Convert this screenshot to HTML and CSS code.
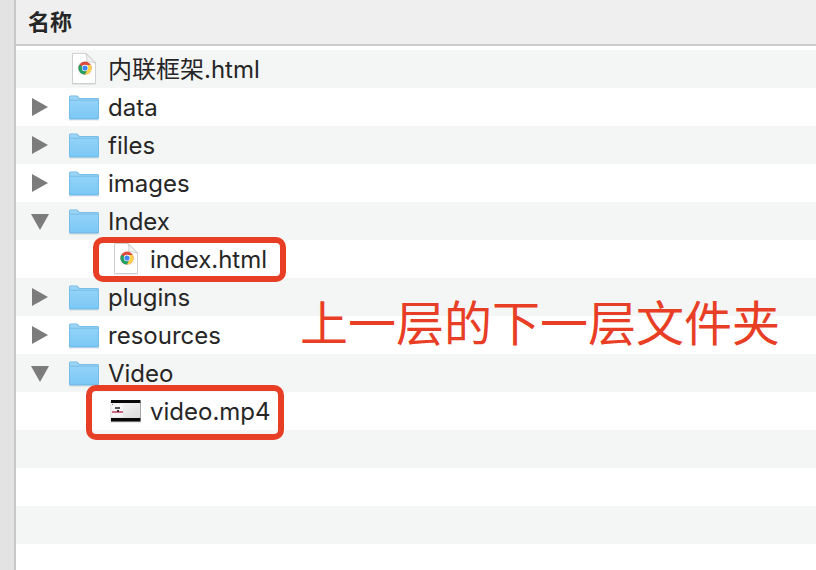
FILE: index.html
```html
<!DOCTYPE html>
<html lang="zh-CN">
<head>
<meta charset="utf-8">
<title>名称</title>
<link rel="stylesheet" href="styles.css">
</head>
<body>
<svg class="defs" aria-hidden="true">
  <defs>
    <linearGradient id="blue" x1="0" y1="0" x2="0" y2="1">
      <stop offset="0" stop-color="#92d2f8"/><stop offset="1" stop-color="#7cc8f5"/>
    </linearGradient>
    <linearGradient id="film" x1="0" y1="0" x2="1" y2="1">
      <stop offset="0" stop-color="#f6f6f6"/><stop offset="1" stop-color="#dcdcdc"/>
    </linearGradient>
    <symbol id="folder" viewBox="0 0 32 28">
      <path d="M1 25.500h30v1H1z" fill="#000" opacity=".12"/>
      <path d="M1 3Q1 1.500 2.500 1.500H8.500Q9.500 1.500 10 2.200L11.500 4H29.500Q31 4 31 5.500V24Q31 25.500 29.500 25.500H2.500Q1 25.500 1 24z" fill="#69b5e2"/>
      <path d="M1.700 3Q1.700 2.200 2.500 2.200H8.500Q9 2.200 9.500 2.800L11 4.700H29.500Q30.300 4.700 30.300 5.500V8H1.700z" fill="#9bd5f6"/>
      <path d="M1.700 6.700H30.300V23.500Q30.300 24.500 29.300 24.500H2.700Q1.700 24.500 1.700 23.500z" fill="url(#blue)"/>
      <path d="M1.700 6.200h28.600" stroke="#69b5e2" stroke-width=".8"/>
    </symbol>
    <symbol id="page" viewBox="0 1 32 34">
      <path d="M4 2h14.500l9 9V32.500H4z" fill="#000" opacity=".13"/>
      <path d="M4.500 1.500H18L27.500 11V31.500H4.500z" fill="#fff" stroke="#c6c6c6" stroke-width=".8"/>
      <path d="M18 1.500Q19.500 6 18.700 9.800Q23 9.500 27.500 11z" fill="#f3f3f3" stroke="#c4c4c4" stroke-width=".8"/>
      <rect x="10" y="10" width="14" height="13" rx="3" fill="#f4f4f4"/>
      <circle cx="17" cy="16" r="6.500" fill="#de4b3c"/>
      <path d="M17 16L11.400 12.700A6.500 6.500 0 0 0 17 22.500L19.600 17.500z" fill="#22a160"/>
      <path d="M17 13H22.800A6.500 6.500 0 0 1 17 22.500L19.600 17.500z" fill="#fdd04a"/>
      <circle cx="17" cy="16" r="3.200" fill="#fff"/>
      <circle cx="17" cy="16" r="2.600" fill="#4285f4"/>
    </symbol>
    <symbol id="clip" viewBox="0 0 32 28">
      <path d="M.5 3h30.500v21.500H.5z" fill="#000" opacity=".18"/>
      <path d="M1 2h29.500v21.500H1z" fill="#080808"/>
      <path d="M1 5h29.500v15H1z" fill="url(#film)"/>
      <path d="M2 6h11v13H2z" fill="#fff" opacity=".5"/>
      <path d="M5 9h5v2H5z" fill="#555"/>
      <path d="M2 13h11v2H2z" fill="#cb6a85"/>
      <path d="M7 12h2v2H7z" fill="#333"/>
      <path d="M2 6h1v1H2z" fill="#777"/>
    </symbol>
  </defs>
</svg>
<div class="window">
  <aside class="gutter"></aside>
  <main class="pane">
    <h1 class="header">名称</h1>
    <ul class="rows">
      <li class="row"><svg class="icon"><use href="#page"/></svg><span>内联框架.html</span></li>
      <li class="row"><button class="toggle" aria-label="data" aria-expanded="false"></button><svg class="icon"><use href="#folder"/></svg><span>data</span></li>
      <li class="row"><button class="toggle" aria-label="files" aria-expanded="false"></button><svg class="icon"><use href="#folder"/></svg><span>files</span></li>
      <li class="row"><button class="toggle" aria-label="images" aria-expanded="false"></button><svg class="icon"><use href="#folder"/></svg><span>images</span></li>
      <li class="row"><button class="toggle" aria-label="Index" aria-expanded="true"></button><svg class="icon"><use href="#folder"/></svg><span>Index</span></li>
      <li class="row child"><svg class="icon"><use href="#page"/></svg><span>index.html</span><i class="mark mark-page"></i></li>
      <li class="row"><button class="toggle" aria-label="plugins" aria-expanded="false"></button><svg class="icon"><use href="#folder"/></svg><span>plugins</span><strong class="note">上一层的下一层文件夹</strong></li>
      <li class="row"><button class="toggle" aria-label="resources" aria-expanded="false"></button><svg class="icon"><use href="#folder"/></svg><span>resources</span></li>
      <li class="row"><button class="toggle" aria-label="Video" aria-expanded="true"></button><svg class="icon"><use href="#folder"/></svg><span>Video</span></li>
      <li class="row child"><svg class="icon"><use href="#clip"/></svg><span>video.mp4</span><i class="mark mark-clip"></i></li>
      <li class="row"></li>
      <li class="row"></li>
      <li class="row"></li>
    </ul>
  </main>
</div>
</body>
</html>
```
FILE: styles.css
```css
* {
  box-sizing: border-box;
}

body {
  margin: 0;
  background: #fff;
  color: #262626;
  font-family: Inter, "Noto Sans CJK SC", sans-serif;
  font-size: 24px;
}

.defs {
  position: absolute;
  width: 0;
  height: 0;
}

.window {
  display: flex;
  min-height: 100vh;
}

.gutter {
  flex: 0 0 16px;
  background: #e3e3e3;
  border-right: 2px solid #c8c8c8;
}

.pane {
  flex: 1;
  min-width: 0;
}

.header {
  margin: 0;
  height: 46px;
  padding-left: 12px;
  background: #efefef;
  border-bottom: 2px solid #cbcbcb;
  font-size: 22px;
  font-weight: 700;
  line-height: 44px;
}

.rows {
  margin: 0;
  padding: 4px 0 0;
  list-style: none;
}

.row {
  position: relative;
  display: flex;
  align-items: center;
  height: 38px;
  padding: 2px 0 0 52px;
  line-height: 36px;
  white-space: nowrap;
}

.row:nth-child(odd) {
  background: #f4f5f5;
}

.child {
  padding-left: 94px;
}

.icon {
  flex: none;
  width: 32px;
  height: 34px;
  margin-right: 8px;
}

.toggle {
  width: 16px;
  height: 18px;
  margin: 0 20px 2px -36px;
  padding: 0;
  border: 0;
  background: #7c7c7c;
  clip-path: polygon(0 0, 100% 50%, 0 100%);
}

.toggle[aria-expanded="true"] {
  width: 18px;
  height: 16px;
  margin: 0 19px 0 -37px;
  clip-path: polygon(0 0, 100% 0, 50% 100%);
}

.mark {
  position: absolute;
  z-index: 1;
  border: 6px solid #e83e25;
  border-radius: 10px;
}

.mark-page {
  left: 77px;
  top: -3px;
  width: 193px;
  height: 45px;
}

.mark-clip {
  left: 70px;
  top: -7px;
  width: 198px;
  height: 55px;
}

.note {
  position: absolute;
  z-index: 1;
  left: 284px;
  top: 10px;
  color: #e83e25;
  font-size: 48px;
  font-weight: 400;
  line-height: 72px;
}
```
